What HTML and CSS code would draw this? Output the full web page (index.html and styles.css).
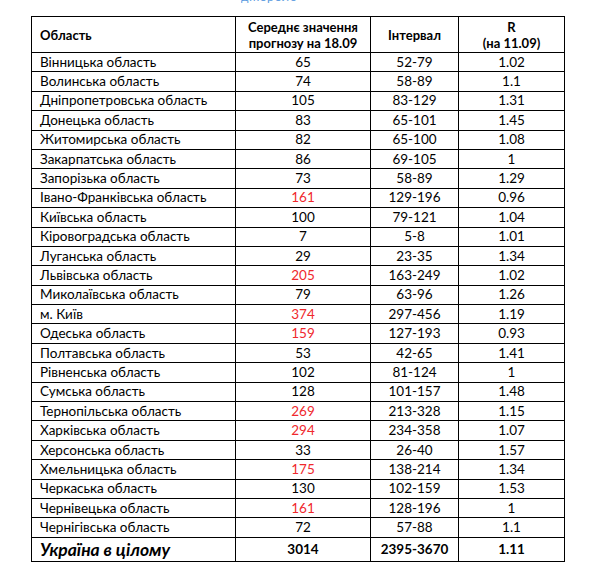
FILE: index.html
```html
<!DOCTYPE html>
<html lang="uk">
<head>
    <meta charset="UTF-8">
    <title>Прогноз по областях</title>
    <link rel="stylesheet" href="styles.css">
</head>
<body>
    <div class="page">
        <div class="source-link"><span>джерело</span></div>

        <table class="forecast">
            <thead>
                <tr>
                    <th class="region">Область</th>
                    <th>Середнє значення<br>прогнозу на 18.09</th>
                    <th>Інтервал</th>
                    <th>R<br>(на 11.09)</th>
                </tr>
            </thead>
            <tbody id="rows"></tbody>
            <tfoot>
                <tr class="total">
                    <td class="region">Україна в цілому</td>
                    <td>3014</td>
                    <td>2395-3670</td>
                    <td>1.11</td>
                </tr>
            </tfoot>
        </table>
    </div>

    <script>
        // region, mean, interval, R, highlighted
        const data = [
            ['Вінницька область', 65, '52-79', '1.02'],
            ['Волинська область', 74, '58-89', '1.1'],
            ['Дніпропетровська область', 105, '83-129', '1.31'],
            ['Донецька область', 83, '65-101', '1.45'],
            ['Житомирська область', 82, '65-100', '1.08'],
            ['Закарпатська область', 86, '69-105', '1'],
            ['Запорізька область', 73, '58-89', '1.29'],
            ['Івано-Франківська область', 161, '129-196', '0.96', true],
            ['Київська область', 100, '79-121', '1.04'],
            ['Кіровоградська область', 7, '5-8', '1.01'],
            ['Луганська область', 29, '23-35', '1.34'],
            ['Львівська область', 205, '163-249', '1.02', true],
            ['Миколаївська область', 79, '63-96', '1.26'],
            ['м. Київ', 374, '297-456', '1.19', true],
            ['Одеська область', 159, '127-193', '0.93', true],
            ['Полтавська область', 53, '42-65', '1.41'],
            ['Рівненська область', 102, '81-124', '1'],
            ['Сумська область', 128, '101-157', '1.48'],
            ['Тернопільська область', 269, '213-328', '1.15', true],
            ['Харківська область', 294, '234-358', '1.07', true],
            ['Херсонська область', 33, '26-40', '1.57'],
            ['Хмельницька область', 175, '138-214', '1.34', true],
            ['Черкаська область', 130, '102-159', '1.53'],
            ['Чернівецька область', 161, '128-196', '1', true],
            ['Чернігівська область', 72, '57-88', '1.1']
        ];

        const tbody = document.getElementById('rows');
        data.forEach(([name, mean, range, r, hot]) => {
            const tr = document.createElement('tr');
            tr.innerHTML = `
                <td class="region">${name}</td>
                <td class="${hot ? 'hot' : ''}">${mean}</td>
                <td>${range}</td>
                <td>${r}</td>
            `;
            tbody.appendChild(tr);
        });
    </script>
</body>
</html>
```

FILE: styles.css
```css
body {
    margin: 0;
    background: #fff;
    font-family: 'Lato', 'Liberation Sans', sans-serif;
    color: #000;
}

.page {
    padding: 0 0 0 31px;
}

.source-link {
    height: 3px;
    overflow: hidden;
    margin-left: 210px;
    margin-bottom: 13px;
    display: flex;
    align-items: flex-end;
}

.source-link span {
    color: #5b9be0;
    font-size: 12px;
    line-height: 12px;
    letter-spacing: 1px;
}

.forecast {
    border-collapse: collapse;
    width: 534px;
    table-layout: fixed;
    font-size: 13.5px;
    border: 1.5px solid #000;
}

.forecast th,
.forecast td {
    border: 1px solid #000;
    text-align: center;
    padding: 0 8px;
    white-space: nowrap;
}

.forecast th:nth-child(1) { width: 187px; }
.forecast th:nth-child(2) { width: 118px; }
.forecast th:nth-child(3) { width: 71px; }

.forecast th {
    font-weight: bold;
    font-size: 13px;
    height: 35px;
    line-height: 16px;
}

.forecast .region {
    text-align: left;
}

.forecast tbody td {
    height: 18.4px;
    line-height: 15px;
}

.forecast td.hot {
    color: #f0282d;
}

.total td {
    height: 23px;
    font-weight: bold;
}

.total td.region {
    font-style: italic;
    font-size: 17.5px;
}
```
